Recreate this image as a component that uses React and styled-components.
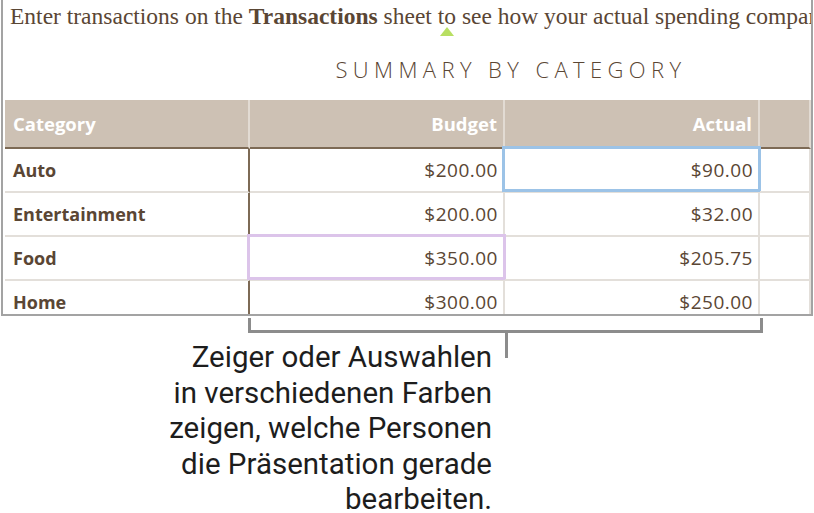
import styled, { createGlobalStyle, css } from "styled-components"

const GlobalStyle = createGlobalStyle`
	html, body {
		margin: 0;
		padding: 0;
		background: #ffffff;
	}
	body {
		width: 814px;
		height: 513px;
		overflow: hidden;
	}
`

const rows = [
	{ category: "Auto", budget: "$200.00", actual: "$90.00", mark: { actual: "blue" } },
	{ category: "Entertainment", budget: "$200.00", actual: "$32.00" },
	{ category: "Food", budget: "$350.00", actual: "$205.75", mark: { budget: "purple" } },
	{ category: "Home", budget: "$300.00", actual: "$250.00" },
]

const App = () => {
	return (
		<Page>
			<GlobalStyle />
			<Frame>
				<Intro>
					Enter transactions on the <b>Transactions</b> sheet{" "}
					<Cursor>to</Cursor> see how your actual spending compares to your budget.
				</Intro>
				<Title>SUMMARY BY CATEGORY</Title>
				<Table>
					<HeadCell>Category</HeadCell>
					<HeadCell $right>Budget</HeadCell>
					<HeadCell $right>Actual</HeadCell>
					<HeadCell />
					{rows.map((row) => (
						<Row key={row.category}>
							<Cell $label>{row.category}</Cell>
							<Cell $right $mark={row.mark?.budget}>{row.budget}</Cell>
							<Cell $right $mark={row.mark?.actual}>{row.actual}</Cell>
							<Cell />
						</Row>
					))}
				</Table>
			</Frame>
			<Bracket />
			<CalloutRow>
				<CalloutText>
					Zeiger oder Auswahlen
					<br />
					in verschiedenen Farben
					<br />
					zeigen, welche Personen
					<br />
					die Präsentation gerade
					<br />
					bearbeiten.
				</CalloutText>
				<Stem />
			</CalloutRow>
		</Page>
	)
}

const Page = styled.div`
	width: 814px;
`

const Frame = styled.div`
	box-sizing: border-box;
	margin-left: 1px;
	width: 812px;
	height: 316px;
	border: 2px solid #a3a3a3;
	border-top: none;
	overflow: hidden;
`

const Intro = styled.div`
	height: 40px;
	padding: 2px 0 0 7px;
	box-sizing: border-box;
	font-family: "Liberation Serif", "DejaVu Serif", serif;
	font-size: 23.5px;
	line-height: 28px;
	color: #5a4634;
	white-space: nowrap;

	b {
		font-weight: 700;
	}
`

const Cursor = styled.span`
	position: relative;

	&::after {
		content: "";
		position: absolute;
		left: 50%;
		top: calc(100% - 2px);
		transform: translateX(-50%);
		border-left: 7px solid transparent;
		border-right: 7px solid transparent;
		border-bottom: 9px solid #b8df62;
	}
`

const Title = styled.div`
	height: 60px;
	box-sizing: border-box;
	padding: 17px 0 0 208px;
	text-align: center;
	font-family: "Open Sans", "Noto Sans", sans-serif;
	font-weight: 300;
	font-size: 22px;
	line-height: 24px;
	letter-spacing: 5.4px;
	color: #5a4634;
`

const Table = styled.div`
	display: grid;
	grid-template-columns: 245px 255px 255px 1fr;
	margin-left: 2px;
	font-family: "Open Sans", "Noto Sans", sans-serif;
`

const Row = styled.div`
	display: contents;
`

const HeadCell = styled.div`
	box-sizing: border-box;
	height: 49px;
	display: flex;
	align-items: center;
	justify-content: ${(p) => (p.$right ? "flex-end" : "flex-start")};
	padding: 0 6px 0 8px;
	background: #cdc1b4;
	border-bottom: 2px solid #7d6a55;
	border-right: 2px solid #e2dbd3;
	color: #ffffff;
	font-weight: 700;
	font-size: 18.5px;

	&:last-of-type {
		border-right: none;
	}
`

const markColors = {
	blue: "#9cc3e7",
	purple: "#dcc4ea",
}

const Cell = styled.div`
	position: relative;
	box-sizing: border-box;
	height: 44px;
	display: flex;
	align-items: center;
	justify-content: ${(p) => (p.$right ? "flex-end" : "flex-start")};
	padding: 0 5px 0 8px;
	border-bottom: 2px solid #e3dfda;
	border-right: 2px solid #e3dfda;
	color: #5a4634;
	font-size: 19px;
	letter-spacing: 0.5px;
	font-weight: 400;

	${(p) =>
		p.$label &&
		css`
			font-size: 18px;
			letter-spacing: 0;
			font-weight: 700;
			border-right-color: #7d6a55;
		`}

	${(p) =>
		p.$mark &&
		css`
			&::after {
				content: "";
				position: absolute;
				inset: -3px -3px -1px -3px;
				border: 3px solid ${markColors[p.$mark]};
				pointer-events: none;
			}
		`}
`

const Bracket = styled.div`
	box-sizing: border-box;
	margin: 2px 0 0 248px;
	width: 515px;
	height: 15px;
	border: 3px solid #8c8c8c;
	border-top: none;
`

const CalloutRow = styled.div`
	display: flex;
	align-items: flex-start;
`

const CalloutText = styled.div`
	box-sizing: border-box;
	width: 492px;
	padding-top: 7px;
	text-align: right;
	font-family: Roboto, "Liberation Sans", sans-serif;
	font-size: 29.5px;
	line-height: 35.5px;
	color: #1d1d1d;
`

const Stem = styled.div`
	margin-left: 13px;
	width: 3px;
	height: 25px;
	background: #8c8c8c;
`

export default App
